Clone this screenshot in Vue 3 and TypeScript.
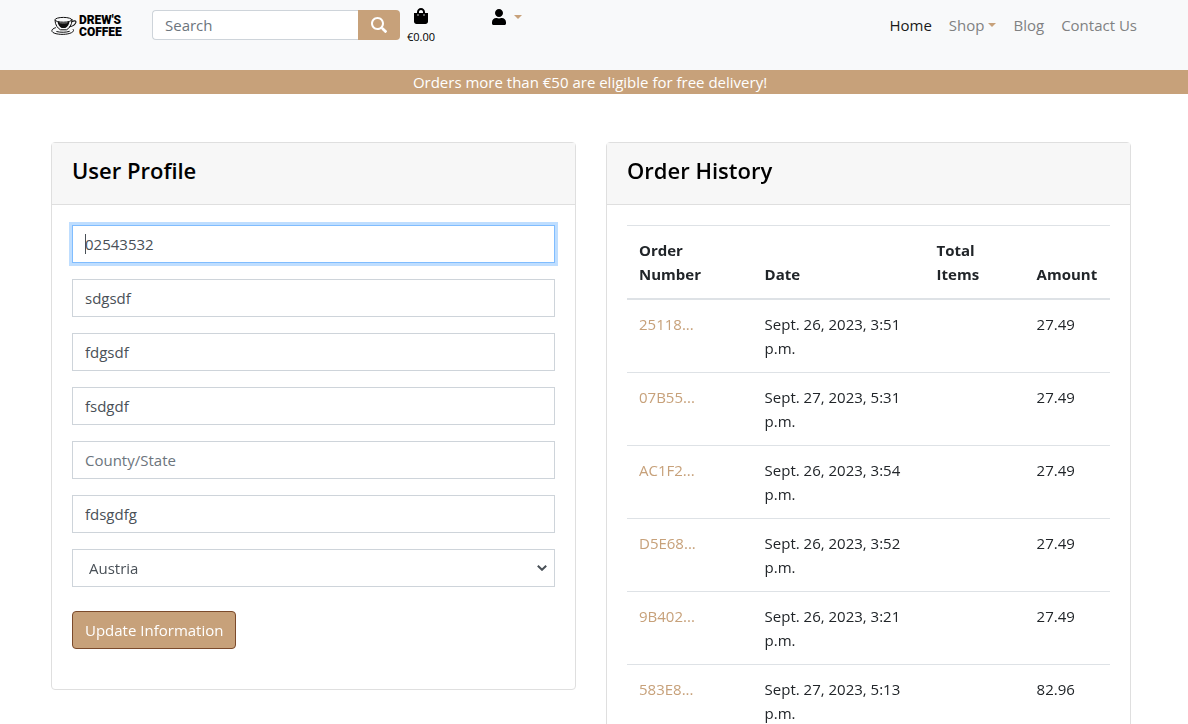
<script setup lang="ts">
import { nextTick, onMounted, ref } from 'vue'

interface Field {
  id: string
  label: string
  value: string
}

interface Order {
  number: string
  date: string
  items: string
  amount: string
}

const fields = ref<Field[]>([
  { id: 'phone', label: 'Phone Number', value: '02543532' },
  { id: 'address1', label: 'Street Address 1', value: 'sdgsdf' },
  { id: 'address2', label: 'Street Address 2', value: 'fdgsdf' },
  { id: 'town', label: 'Town or City', value: 'fsdgdf' },
  { id: 'county', label: 'County/State', value: '' },
  { id: 'postcode', label: 'Postal Code', value: 'fdsgdfg' },
])
const country = ref('Austria')
const countries: string[] = ['Austria', 'Belgium', 'France', 'Germany', 'Ireland']
const query = ref('')

const orders: Order[] = [
  { number: '25118...', date: 'Sept. 26, 2023, 3:51 p.m.', items: '', amount: '27.49' },
  { number: '07B55...', date: 'Sept. 27, 2023, 5:31 p.m.', items: '', amount: '27.49' },
  { number: 'AC1F2...', date: 'Sept. 26, 2023, 3:54 p.m.', items: '', amount: '27.49' },
  { number: 'D5E68...', date: 'Sept. 26, 2023, 3:52 p.m.', items: '', amount: '27.49' },
  { number: '9B402...', date: 'Sept. 26, 2023, 3:21 p.m.', items: '', amount: '27.49' },
  { number: '583E8...', date: 'Sept. 27, 2023, 5:13 p.m.', items: '', amount: '82.96' },
]

const form = ref<HTMLFormElement | null>(null)
// True until the user first interacts: the first field shows a steady cursor at its start.
const pristine = ref(true)

onMounted(async () => {
  await nextTick()
  const first = form.value?.querySelector('input')
  first?.focus({ preventScroll: true })
  first?.setSelectionRange(0, 0)
})
</script>

<template>
  <div class="page">
    <header class="topbar">
      <div class="bar">
        <a href="#" class="brand" aria-label="Drew's Coffee">
          <svg class="cup" viewBox="0 0 26 20" width="26" height="20" fill="none" stroke="#111" stroke-linecap="round" aria-hidden="true">
            <ellipse cx="12.500" cy="3.800" rx="8.500" ry="2.400" stroke-width="1" />
            <path d="M4 4.500c.3 4.800 2.600 7.600 5.500 9.300h6c3-1.700 5.200-4.500 5.500-9.300" stroke-width="1" />
            <path d="M6.500 5.600c3 1.500 9 1.500 12 0-.4 3.300-1.900 5.300-4.200 6.500h-3.600c-2.200-1.200-3.800-3.200-4.200-6.500z" fill="#111" stroke="none" />
            <path d="M9 6.800c2 .5 5 .5 7 0" stroke="#777" stroke-width="1" />
            <path d="M21 5.600c2-1.200 4.400-1 3.900.7-.6 2.100-3 3.700-6.200 4.500" stroke-width="1.100" />
            <path d="M4.500 11.700c-5 1.600-5 4.600.5 6 6 1.400 14 .6 16.800-1.900.9-.8 1-1.600.4-2.300M5.800 15.600c4 1 9 .9 12.500-.2" stroke-width="1" />
          </svg>
          <span class="brand-text"><span>DREW'S</span><span>COFFEE</span></span>
        </a>

        <form class="search" role="search" @submit.prevent>
          <input v-model="query" type="search" placeholder="Search" aria-label="Search" />
          <button type="submit" aria-label="Submit search">
            <svg viewBox="0 0 512 512" width="16" height="16" fill="#fff" aria-hidden="true">
              <path d="M505 442.700L405.300 343c-4.500-4.500-10.600-7-17-7H372c27.600-35.300 44-79.700 44-128C416 93.100 322.900 0 208 0S0 93.100 0 208s93.100 208 208 208c48.300 0 92.700-16.400 128-44v16.300c0 6.400 2.500 12.500 7 17l99.700 99.700c9.400 9.400 24.600 9.400 33.900 0l28.300-28.300c9.400-9.400 9.400-24.600.1-34zM208 352c-79.500 0-144-64.500-144-144S128.500 64 208 64s144 64.500 144 144-64.500 144-144 144z" />
            </svg>
          </button>
        </form>

        <a href="#" class="bag">
          <svg viewBox="0 0 448 512" width="14" height="16" fill="#000" aria-hidden="true">
            <path d="M352 160v-32C352 57.400 294.600 0 224 0S96 57.400 96 128v32H0v272c0 44.200 35.800 80 80 80h288c44.200 0 80-35.800 80-80V160h-96zm-192-32c0-35.300 28.700-64 64-64s64 28.700 64 64v32H160v-32zm160 120c-13.300 0-24-10.700-24-24s10.700-24 24-24 24 10.700 24 24-10.700 24-24 24zm-192 0c-13.300 0-24-10.700-24-24s10.700-24 24-24 24 10.700 24 24-10.700 24-24 24z" />
          </svg>
          <span>€0.00</span>
        </a>

        <button type="button" class="account" aria-label="My account">
          <svg viewBox="0 0 448 512" width="14" height="16" fill="#000" aria-hidden="true">
            <path d="M224 256c70.700 0 128-57.300 128-128S294.700 0 224 0 96 57.300 96 128s57.300 128 128 128zm89.600 32h-16.700c-22.200 10.200-46.900 16-72.900 16s-50.600-5.800-72.900-16h-16.700C60.200 288 0 348.200 0 422.400V464c0 26.500 21.500 48 48 48h352c26.500 0 48-21.500 48-48v-41.600c0-74.200-60.200-134.400-134.400-134.400z" />
          </svg>
          <i class="caret"></i>
        </button>

        <nav class="menu" aria-label="Main">
          <a href="#" class="current">Home</a>
          <a href="#">Shop<i class="caret"></i></a>
          <a href="#">Blog</a>
          <a href="#">Contact Us</a>
        </nav>
      </div>
    </header>

    <p class="banner">Orders more than €50 are eligible for free delivery!</p>

    <main class="columns">
      <section class="card">
        <div class="card-header"><h2>User Profile</h2></div>
        <form
          ref="form"
          class="card-body profile"
          :class="{ pristine }"
          @submit.prevent
          @keydown="pristine = false"
          @pointerdown="pristine = false"
        >
          <input
            v-for="field in fields"
            :id="field.id"
            :key="field.id"
            v-model="field.value"
            class="control"
            type="text"
            :placeholder="field.label"
            :aria-label="field.label"
          />
          <div class="select-wrap">
            <select v-model="country" class="control" aria-label="Country">
              <option v-for="name in countries" :key="name" :value="name">{{ name }}</option>
            </select>
            <svg class="chevron" viewBox="0 0 10 6" width="10" height="6" fill="none" stroke="#495057" stroke-width="2" aria-hidden="true">
              <path d="M.8.8L5 4.800 9.200.8" />
            </svg>
          </div>
          <button type="submit" class="update">Update Information</button>
        </form>
      </section>

      <section class="card">
        <div class="card-header"><h2>Order History</h2></div>
        <div class="card-body">
          <table>
            <colgroup>
              <col class="col-number" />
              <col class="col-date" />
              <col class="col-items" />
              <col />
            </colgroup>
            <thead>
              <tr>
                <th scope="col">Order Number</th>
                <th scope="col">Date</th>
                <th scope="col">Total Items</th>
                <th scope="col">Amount</th>
              </tr>
            </thead>
            <tbody>
              <tr v-for="order in orders" :key="order.number">
                <td><a href="#">{{ order.number }}</a></td>
                <td>{{ order.date }}</td>
                <td>{{ order.items }}</td>
                <td>{{ order.amount }}</td>
              </tr>
            </tbody>
          </table>
        </div>
      </section>
    </main>
  </div>
</template>

<style>
html {
  overflow: hidden;
}
body {
  margin: 0;
  background: #fff;
}
</style>

<style scoped>
.page {
  font: 400 15px/24px "Open Sans", "Noto Sans", sans-serif;
  color: #212529;
}
.page * {
  box-sizing: border-box;
}
input,
select,
button {
  font: inherit;
  margin: 0;
}
a {
  color: #c7a17a;
  text-decoration: none;
}
.bar,
.columns {
  width: calc(100% - 102px);
  max-width: 1086px;
  margin: 0 auto;
}
.topbar {
  background: #f8f9fa;
}
.bar {
  display: flex;
  align-items: flex-start;
  height: 70px;
}
.brand {
  display: flex;
  align-items: center;
  gap: 2px;
  width: 101px;
  padding-top: 14px;
  color: #000;
}
.brand-text {
  display: flex;
  flex-direction: column;
  font: 900 12px/12px Roboto, sans-serif;
}
.search {
  display: flex;
  width: 248px;
  height: 30px;
  margin-top: 10px;
}
.search input {
  flex: 1;
  min-width: 0;
  padding: 0 12px;
  border: 1px solid #ced4da;
  border-right: 0;
  border-radius: 4px 0 0 4px;
  background: #fff;
  color: #495057;
  appearance: none;
}
input::placeholder {
  color: #6c757d;
  opacity: 1;
}
.search button {
  display: flex;
  align-items: center;
  justify-content: center;
  width: 42px;
  padding: 0;
  border: 0;
  border-radius: 0 4px 4px 0;
  background: #c7a17a;
}
.bag {
  display: flex;
  flex-direction: column;
  align-items: center;
  gap: 4px;
  width: 28px;
  margin-left: 7px;
  padding-top: 8px;
  color: #000;
  font-size: 11px;
  line-height: 18px;
}
.account {
  display: flex;
  align-items: center;
  gap: 8px;
  margin: 9px 0 0 57px;
  padding: 0;
  border: 0;
  background: none;
}
.caret {
  display: inline-block;
  border: 4px solid transparent;
  border-top-color: #c7a17a;
  border-bottom: 0;
}
.menu {
  display: flex;
  gap: 17px;
  margin-left: auto;
  padding-top: 13px;
}
.menu a {
  display: flex;
  align-items: center;
  gap: 4px;
  color: #808182;
}
.menu a.current {
  color: #191919;
}
.banner {
  margin: 0;
  padding-right: 8px;
  background: #c7a17a;
  color: #fff;
  text-align: center;
}
.columns {
  display: grid;
  grid-template-columns: 1fr 1fr;
  align-items: start;
  gap: 30px;
  padding: 48px 6px 0 0;
}
.card {
  border: 1px solid #dfdfdf;
  border-radius: 4px;
}
.card-header {
  padding: 13px 20px 19px;
  border-bottom: 1px solid #dfdfdf;
  background: #f7f7f7;
}
h2 {
  margin: 0;
  color: #000;
  font-size: 22px;
  font-weight: 600;
  line-height: 29px;
}
.card-body {
  padding: 20px;
}
.profile {
  display: flex;
  flex-direction: column;
  gap: 16px;
  padding-bottom: 40px;
}
.control {
  width: 100%;
  height: 38px;
  padding: 0 12px;
  border: 1px solid #ced4da;
  border-radius: 0;
  background: #fff;
  color: #495057;
  appearance: none;
}
select.control {
  display: block;
  padding: 0 16px;
}
.control:focus {
  border-color: #80bdff;
  outline: 0;
  box-shadow: 0 0 0 3px #bfdeff;
}
.pristine input:focus {
  background: linear-gradient(#495057, #495057) 12px center / 1px 20px no-repeat #fff;
  caret-color: transparent;
}
.select-wrap {
  position: relative;
}
.chevron {
  position: absolute;
  top: 16px;
  right: 8px;
  pointer-events: none;
}
.update {
  align-self: flex-start;
  height: 38px;
  margin-top: 8px;
  padding: 0 12px;
  border: 1px solid #7b4a2b;
  border-radius: 4px;
  background: #c7a17a;
  color: #fff;
}
table {
  width: 100%;
  table-layout: fixed;
  border-collapse: collapse;
}
.col-number {
  width: 26%;
}
.col-date {
  width: 172px;
}
.col-items {
  width: 100px;
}
th,
td {
  padding: 12px;
  border-top: 1px solid #dee2e6;
  text-align: left;
  vertical-align: top;
}
th {
  border-bottom: 2px solid #dee2e6;
  font-weight: 700;
  vertical-align: bottom;
}
</style>
